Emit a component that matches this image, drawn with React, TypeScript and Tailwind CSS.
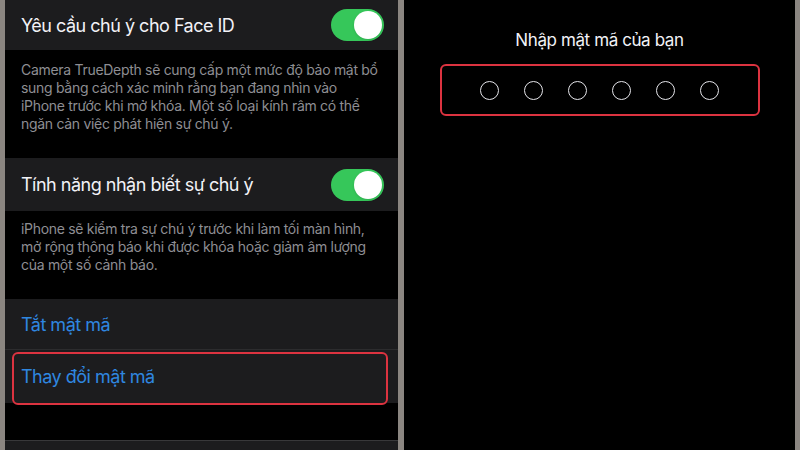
import React from "react"

const Toggle = () => (
  <div className="w-[53px] h-[32px] rounded-full bg-[#36c75a] flex items-center justify-end p-[2px]">
    <div className="w-[28px] h-[28px] rounded-full bg-white shadow" />
  </div>
)

const SettingRow = ({ label, on }: { label: string; on?: boolean }) => (
  <div className="flex items-center justify-between pl-4 pr-[14px] h-full">
    <span className="text-[18px] text-[#f2f2f7] tracking-[-0.5px]">{label}</span>
    {on && <Toggle />}
  </div>
)

const Footer = ({ lines, className }: { lines: string[]; className: string }) => (
  <div className={`pl-4 pr-2 text-[14px] leading-[18px] tracking-[-0.3px] text-[#8e8e93] whitespace-nowrap ${className}`}>
    {lines.map((l) => (
      <div key={l}>{l}</div>
    ))}
  </div>
)

export default function App() {
  return (
    <div
      className="w-[800px] h-[450px] bg-[#8b8681] flex px-[5px] gap-[6px] overflow-hidden"
      style={{ fontFamily: "Inter, 'Noto Sans', sans-serif" }}
    >
      {/* left: settings list */}
      <div className="w-[393px] bg-black flex flex-col">
        <div className="h-[50px] bg-[#1c1c1e]">
          <SettingRow label="Yêu cầu chú ý cho Face ID" on />
        </div>
        <Footer
          className="h-[108px] pt-[11px]"
          lines={[
            "Camera TrueDepth sẽ cung cấp một mức độ bảo mật bổ",
            "sung bằng cách xác minh rằng bạn đang nhìn vào",
            "iPhone trước khi mở khóa. Một số loại kính râm có thể",
            "ngăn cản việc phát hiện sự chú ý.",
          ]}
        />
        <div className="h-[53px] bg-[#1c1c1e]">
          <SettingRow label="Tính năng nhận biết sự chú ý" on />
        </div>
        <Footer
          className="h-[88px] pt-[9px]"
          lines={[
            "iPhone sẽ kiểm tra sự chú ý trước khi làm tối màn hình,",
            "mở rộng thông báo khi được khóa hoặc giảm âm lượng",
            "của một số cảnh báo.",
          ]}
        />
        <div className="h-[51px] bg-[#1c1c1e] border-b border-[#2c2c2e] flex items-center pl-4">
          <span className="text-[18px] text-[#2f87e0] tracking-[-0.5px]">Tắt mật mã</span>
        </div>
        <div className="h-[53px] bg-[#1c1c1e] flex items-center pl-4 relative">
          <span className="text-[18px] text-[#2f87e0] tracking-[-0.5px]">Thay đổi mật mã</span>
          <div className="absolute left-[7px] right-[10px] top-[2px] -bottom-[2px] border-[2.5px] border-[#dc3340] rounded-[6px]" />
        </div>
        <div className="h-[37px]" />
        <div className="flex-1 bg-[#1c1c1e] border-t border-[#38383a]" />
      </div>

      {/* right: passcode entry */}
      <div className="flex-1 bg-black flex flex-col items-center">
        <div className="mt-[30px] text-[17px] text-[#f2f2f7] leading-[20px] tracking-[-0.4px]">
          Nhập mật mã của bạn
        </div>
        <div className="mt-[14px] w-[320px] h-[52px] border-[2.5px] border-[#dc3340] rounded-[6px] flex items-center justify-center gap-[25px]">
          {[0, 1, 2, 3, 4, 5].map((i) => (
            <div key={i} className="w-[19px] h-[19px] rounded-full border-[1.5px] border-[#e5e5ea]" />
          ))}
        </div>
      </div>
    </div>
  )
}
